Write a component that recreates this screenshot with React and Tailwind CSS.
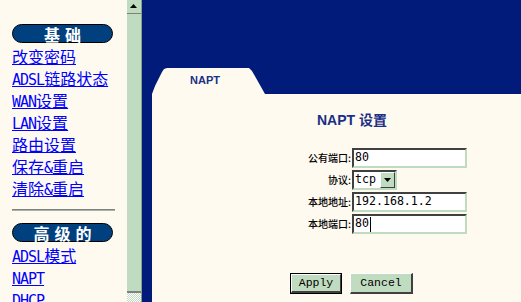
import React from "react";

function Lat({ children }) {
  return (
    <span className="font-['DejaVu_Sans_Mono',monospace] text-[15px] tracking-[-1px] font-light">
      {children}
    </span>
  );
}

function NavLink({ children }) {
  return (
    <div className="leading-[22px] h-[22px]">
      <a href="#" className="text-[16px] text-[#0000ff] underline whitespace-nowrap">
        {children}
      </a>
    </div>
  );
}

function Pill({ text }) {
  return (
    <div className="w-[101px] h-[19px] rounded-full border border-black bg-[#00407f] flex items-center justify-center text-white font-bold text-[16px] leading-[16px] tracking-[5px] pl-[5px]">
      {text}
    </div>
  );
}

function Field({ children, caret }) {
  return (
    <div className="w-[115px] h-[20px] border-2 border-t-[#404040] border-l-[#404040] border-r-[#c0dcc0] border-b-[#c0dcc0] bg-white flex items-center pl-[1px] font-['DejaVu_Sans_Mono',monospace] text-[11.6px] text-black">
      <span>{children}</span>
      {caret && <span className="inline-block w-[1px] h-[15px] bg-black ml-[1px]" />}
    </div>
  );
}

function Label({ children }) {
  return (
    <div className="w-[200px] text-right pr-[1px] text-[10px] leading-[20px] text-black font-['Noto_Sans_CJK_SC',sans-serif] font-medium whitespace-nowrap">
      {children}
    </div>
  );
}

export default function App() {
  return (
    <div className="w-[521px] h-[302px] flex overflow-hidden bg-[#fffaf0]">
      {/* Left navigation frame */}
      <div className="w-[127px] h-full shrink-0 bg-[#fffaf0] pl-[12px] pt-[24px] overflow-hidden font-['Noto_Sans_CJK_SC',sans-serif]">
        <Pill text="基础" />
        <div className="mt-[2px]">
          <NavLink>改变密码</NavLink>
          <NavLink><Lat>ADSL</Lat>链路状态</NavLink>
          <NavLink><Lat>WAN</Lat>设置</NavLink>
          <NavLink><Lat>LAN</Lat>设置</NavLink>
          <NavLink>路由设置</NavLink>
          <NavLink>保存<Lat>&amp;</Lat>重启</NavLink>
          <NavLink>清除<Lat>&amp;</Lat>重启</NavLink>
        </div>
        <div className="mt-[10px] w-[103px] h-[2px] border-t border-t-[#7a847a] border-b border-b-[#a9b2a9]" />
        <div className="mt-[12px]">
          <Pill text="高级的" />
        </div>
        <div className="mt-[2px]">
          <NavLink><Lat>ADSL</Lat>模式</NavLink>
          <NavLink><Lat>NAPT</Lat></NavLink>
          <NavLink><Lat>DHCP</Lat></NavLink>
        </div>
      </div>

      {/* Scrollbar */}
      <div className="w-[15px] h-full shrink-0 flex flex-col bg-[#c0dcc0] border-r border-r-[#8aa08a]">
        <div className="h-[14px] border-b border-b-[#808080] flex items-start pt-[4px] pl-[3px]">
          <svg width="7" height="4" viewBox="0 0 7 4">
            <polygon points="3.5,0 7,4 0,4" fill="#000" />
          </svg>
        </div>
        <div className="flex-1 border-b-2 border-b-[#808080]" />
        <div className="h-[9px] bg-[repeating-conic-gradient(#c0dcc0_0_25%,#ffffff_0_50%)] bg-[length:2px_2px]" />
      </div>

      {/* Right content frame */}
      <div className="flex-1 h-full bg-[#001b7a] flex flex-col">
        <div className="h-[68px] shrink-0" />
        <div className="h-[26px] shrink-0 pl-[10px]">
          <div className="relative w-[113px] h-[26px]">
            <svg className="absolute inset-0" width="113" height="26" viewBox="0 0 113 26">
              <polygon points="0,26 3,18 10,4 12,1 15,0 97,0 100,3 113,26" fill="#fffaf0" />
            </svg>
            <div className="relative pl-[38px] pt-[7px] text-[11px] leading-[11px] font-bold text-[#1a2f85] font-['Liberation_Sans',sans-serif]">
              NAPT
            </div>
          </div>
        </div>
        <div className="flex-1 ml-[10px] bg-[#fffaf0] flex flex-col">
          <div className="pt-[18px] pl-[165px] text-[14px] leading-[16px] font-bold text-[#1a2f85] font-['Liberation_Sans','Noto_Sans_CJK_SC',sans-serif] whitespace-nowrap">
            NAPT 设置
          </div>
          <div className="mt-[20px] flex flex-col gap-[2px]">
            <div className="flex items-center">
              <Label>公有端口:</Label>
              <Field>80</Field>
            </div>
            <div className="flex items-center">
              <Label>协议:</Label>
              <div className="w-[45px] h-[20px] border-2 border-t-[#404040] border-l-[#404040] border-r-[#c0dcc0] border-b-[#c0dcc0] bg-white flex items-center">
                <span className="flex-1 pl-[1px] font-['DejaVu_Sans_Mono',monospace] text-[11.6px] text-black">tcp</span>
                <div className="w-[15px] h-[16px] bg-[#c0dcc0] border border-t-white border-l-white border-r-[#404040] border-b-[#404040] flex items-center justify-center">
                  <svg width="7" height="4" viewBox="0 0 7 4">
                    <polygon points="0,0 7,0 3.5,4" fill="#000" />
                  </svg>
                </div>
              </div>
            </div>
            <div className="flex items-center">
              <Label>本地地址:</Label>
              <Field>192.168.1.2</Field>
            </div>
            <div className="flex items-center">
              <Label>本地端口:</Label>
              <Field caret>80</Field>
            </div>
          </div>
          <div className="mt-[39px] pl-[138px] flex gap-[8px] font-['Liberation_Mono',monospace] text-[11.5px] text-black">
            <div className="w-[52px] h-[21px] border border-black">
              <div className="w-full h-full bg-[#c0dcc0] border border-t-white border-l-white border-r-[#404040] border-b-[#404040] border-b-2 flex items-center justify-center">
                Apply
              </div>
            </div>
            <div className="w-[63px] h-[21px] bg-[#c0dcc0] border border-t-white border-l-white border-r-2 border-b-2 border-r-[#404040] border-b-[#404040] flex items-center justify-center">
              Cancel
            </div>
          </div>
        </div>
      </div>
    </div>
  );
}
